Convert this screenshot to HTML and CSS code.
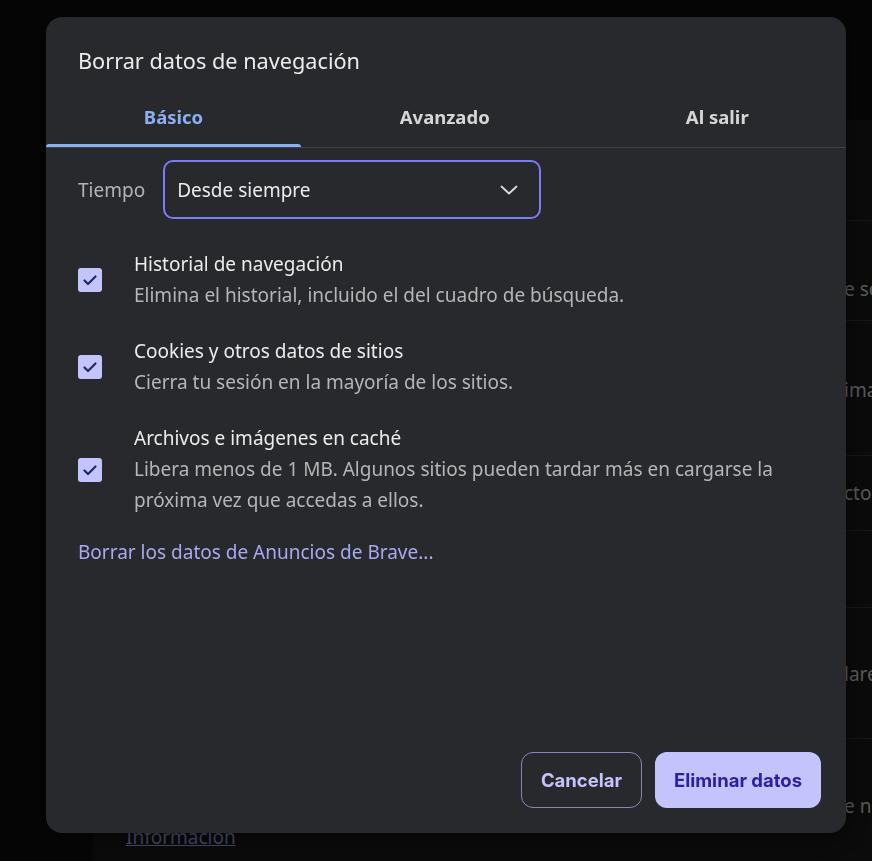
FILE: index.html
```html
<!DOCTYPE html>
<html lang="es">
<head>
<meta charset="utf-8">
<title>Borrar datos de navegación</title>
<link rel="stylesheet" href="styles.css">
</head>
<body>
<div class="page">
  <div class="card">
    <div class="row r1"></div>
    <div class="row r2"><span class="bg-text">e se</span></div>
    <div class="row r3"><span class="bg-text">ima</span></div>
    <div class="row r4"><span class="bg-text">cto</span></div>
    <div class="row r5"></div>
    <div class="row r6"><span class="bg-text">lare</span></div>
    <div class="row r7"><span class="bg-text">e ni</span><a class="bg-link">Información</a></div>
  </div>
</div>

<div class="backdrop"></div>
<div class="dialog" role="dialog">
  <h1 class="title">Borrar datos de navegación</h1>
  <div class="tabs">
    <div class="tab active">Básico</div>
    <div class="tab">Avanzado</div>
    <div class="tab">Al salir</div>
  </div>
  <div class="content">
    <div class="time-row">
      <span class="time-label">Tiempo</span>
      <div class="select">
        <span>Desde siempre</span>
        <svg class="chevron" width="18" height="10" viewBox="0 0 18 10"><polyline points="1.5,1.5 9,8.5 16.5,1.5" fill="none" stroke="#dcdcdc" stroke-width="1.8" stroke-linecap="round" stroke-linejoin="round"/></svg>
      </div>
    </div>
    <div class="items">
      <div class="item">
        <span class="checkbox"><svg width="24" height="24" viewBox="0 0 24 24"><polyline points="6.5,12.5 10,16 17.5,8.5" fill="none" stroke="#1b2a68" stroke-width="2.2" stroke-linecap="round" stroke-linejoin="round"/></svg></span>
        <div class="item-text">
          <div class="item-title">Historial de navegación</div>
          <div class="item-sub">Elimina el historial, incluido el del cuadro de búsqueda.</div>
        </div>
      </div>
      <div class="item">
        <span class="checkbox"><svg width="24" height="24" viewBox="0 0 24 24"><polyline points="6.5,12.5 10,16 17.5,8.5" fill="none" stroke="#1b2a68" stroke-width="2.2" stroke-linecap="round" stroke-linejoin="round"/></svg></span>
        <div class="item-text">
          <div class="item-title">Cookies y otros datos de sitios</div>
          <div class="item-sub">Cierra tu sesión en la mayoría de los sitios.</div>
        </div>
      </div>
      <div class="item">
        <span class="checkbox"><svg width="24" height="24" viewBox="0 0 24 24"><polyline points="6.5,12.5 10,16 17.5,8.5" fill="none" stroke="#1b2a68" stroke-width="2.2" stroke-linecap="round" stroke-linejoin="round"/></svg></span>
        <div class="item-text">
          <div class="item-title">Archivos e imágenes en caché</div>
          <div class="item-sub">Libera menos de 1 MB. Algunos sitios pueden tardar más en cargarse la próxima vez que accedas a ellos.</div>
        </div>
      </div>
    </div>
    <a class="link">Borrar los datos de Anuncios de Brave...</a>
  </div>
  <div class="footer">
    <button class="btn btn-outline">Cancelar</button>
    <button class="btn btn-primary">Eliminar datos</button>
  </div>
</div>
</body>
</html>
```
FILE: styles.css
```css
html, body {
  margin: 0;
  padding: 0;
}
body {
  width: 872px;
  height: 861px;
  overflow: hidden;
  background: #070707;
  font-family: "Noto Sans", "Open Sans", sans-serif;
}

/* background settings page */
.page {
  padding: 120px 0 0 93px;
}
.card {
  background: #0d0d0d;
  height: 760px;
}
.row {
  position: relative;
  border-top: 1px solid #1c1c1e;
  box-sizing: border-box;
  padding-left: 751px;
  font-size: 19px;
  color: #6c6c6c;
  white-space: nowrap;
  overflow: hidden;
}
.r1 { height: 100px; border-top: none; }
.r2 { height: 100px; padding-top: 55px; }
.r3 { height: 135px; padding-top: 56px; }
.r4 { height: 75px; padding-top: 24px; }
.r5 { height: 77px; }
.r6 { height: 131px; padding-top: 53px; }
.r7 { height: 140px; padding-top: 54px; }
.bg-text { display: block; line-height: 26px; }
.bg-link {
  display: block;
  margin-left: -718px;
  margin-top: 5px;
  color: #55587e;
  text-decoration: underline;
  line-height: 26px;
  font-size: 19px;
}

.backdrop {
  position: fixed;
  inset: 0;
  background: rgba(0, 0, 0, 0.15);
}

/* dialog */
.dialog {
  position: fixed;
  left: 46px;
  top: 17px;
  width: 800px;
  height: 816px;
  background: #28292d;
  border-radius: 16px;
  display: flex;
  flex-direction: column;
  box-sizing: border-box;
  padding-top: 30px;
  box-shadow: 0 4px 24px rgba(0,0,0,0.5);
}
.title {
  margin: 0;
  padding: 0 32px;
  font-size: 21.7px;
  font-weight: 400;
  line-height: 28px;
  color: #ececec;
}
.tabs {
  margin-top: 14px;
  display: grid;
  grid-template-columns: 255px 1fr 1fr;
  border-bottom: 1px solid #404146;
}
.tab {
  position: relative;
  height: 58px;
  display: flex;
  align-items: center;
  justify-content: center;
  font-size: 18.5px;
  font-weight: 700;
  color: #d6d6d6;
  padding-bottom: 3px;
  box-sizing: border-box;
}
.tab:nth-child(2) { padding-left: 15px; }
.tab:nth-child(3) { padding-left: 15px; }
.tab.active { color: #8ab0f2; }
.tab.active::after {
  content: "";
  position: absolute;
  left: 0;
  right: 0;
  bottom: 0;
  height: 3px;
  background: #8ab0f2;
  border-radius: 3px 3px 0 0;
}

.content {
  padding: 12px 32px 0;
}
.time-row {
  display: flex;
  align-items: center;
  gap: 18px;
}
.time-label {
  font-size: 19px;
  color: #b4b4b6;
}
.select {
  width: 378px;
  height: 59px;
  box-sizing: border-box;
  border: 2px solid #7c7cf4;
  border-radius: 10px;
  display: flex;
  align-items: center;
  justify-content: space-between;
  padding: 0 21px 0 12px;
  font-size: 19px;
  color: #ececec;
}
.chevron { display: block; }

.items {
  margin-top: 30px;
  display: flex;
  flex-direction: column;
  gap: 25px;
}
.item {
  display: flex;
  align-items: center;
  gap: 32px;
}
.checkbox {
  flex: none;
  width: 24px;
  height: 24px;
  border-radius: 3px;
  background: #c4c4fc;
  display: block;
}
.checkbox svg { display: block; }
.item-text {
  font-size: 19px;
  line-height: 31px;
}
.item-title { color: #ececec; }
.item-sub { color: #b6b6b8; }

.link {
  display: block;
  margin-top: 21px;
  font-size: 19px;
  line-height: 31px;
  color: #a9a9f2;
}

.footer {
  margin-top: auto;
  display: flex;
  justify-content: flex-end;
  gap: 13px;
  padding: 0 25px 25px;
}
.btn {
  font-family: Inter, "Noto Sans", sans-serif;
  font-size: 18.5px;
  font-weight: 700;
  border-radius: 12px;
  height: 56px;
  box-sizing: border-box;
  cursor: pointer;
}
.btn-outline {
  width: 121px;
  background: transparent;
  border: 1px solid #8985b6;
  color: #c4c3fb;
}
.btn-primary {
  width: 166px;
  background: #c4c4fc;
  border: none;
  color: #2c21a0;
}
```
